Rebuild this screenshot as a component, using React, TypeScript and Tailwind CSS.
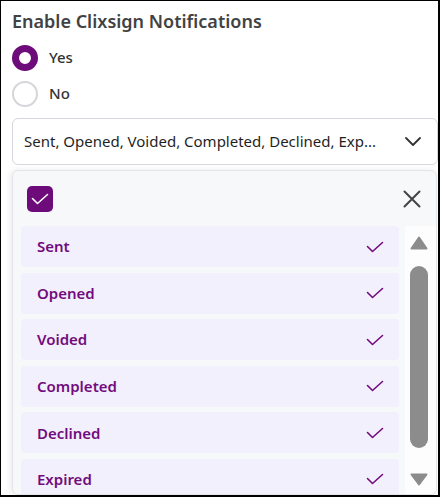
import React from 'react';

const PURPLE = '#6e0b7b';

const options = ['Sent', 'Opened', 'Voided', 'Completed', 'Declined', 'Expired'];

const Check = ({ className }: { className?: string }) => (
  <svg width="18" height="12" viewBox="0 0 18 12" fill="none" className={className}>
    <polyline points="1.5,5.5 6.5,10.5 16.5,1.5" stroke="currentColor" strokeWidth="1.6" strokeLinecap="round" strokeLinejoin="round" />
  </svg>
);

export default function App() {
  return (
    <div
      className="w-[440px] h-[497px] overflow-hidden bg-white border-l border-t border-r-2 border-b-2 border-black pl-[11px]"
      style={{ fontFamily: '"Noto Sans", "Open Sans", sans-serif' }}
    >
      <h2 className="pt-[8px] text-[18px] leading-[24px] font-semibold text-[#424242]">
        Enable Clixsign Notifications
      </h2>

      {/* radio group */}
      <div className="mt-[12px] flex flex-col gap-[10px]">
        <label className="flex items-center gap-[11px] h-[26px]">
          <span className="w-[26px] h-[26px] rounded-full border-[7.5px] border-[#6e0b7b] bg-white" />
          <span className="text-[15px] leading-[20px] font-medium text-[#333] -mt-[2px]">Yes</span>
        </label>
        <label className="flex items-center gap-[11px] h-[26px]">
          <span className="w-[26px] h-[26px] rounded-full border-2 border-[#d4d6da] bg-white" />
          <span className="text-[15px] leading-[20px] font-medium text-[#333] -mt-[2px]">No</span>
        </label>
      </div>

      {/* select */}
      <div className="mt-[11px] h-[47px] rounded-md border border-[#d5d8dc] bg-white flex items-center pl-[11px] pr-[16px]">
        <span className="flex-1 whitespace-nowrap overflow-hidden text-[15px] text-[#1f1f1f]">
          Sent, Opened, Voided, Completed, Declined, Exp...
        </span>
        <svg width="16" height="9" viewBox="0 0 16 9" fill="none" className="text-[#333]">
          <polyline points="1,1 8,8 15,1" stroke="currentColor" strokeWidth="1.8" strokeLinecap="round" strokeLinejoin="round" />
        </svg>
      </div>

      {/* dropdown panel */}
      <div className="mt-[5px] w-[425px] h-[325px] rounded-md border border-[#e3e5e8] bg-[#f7f8fa] shadow-[-2px_0_6px_rgba(0,0,0,0.08)] flex flex-col overflow-hidden">
        <div className="h-[55px] shrink-0 flex items-center justify-between pl-[14px] pr-[15px]">
          <span className="w-[26px] h-[26px] rounded-[5px] flex items-center justify-center text-white" style={{ backgroundColor: PURPLE }}>
            <Check />
          </span>
          <svg width="18" height="18" viewBox="0 0 18 18" fill="none" className="text-[#444]">
            <path d="M1.5 1.5 16.5 16.5M16.5 1.5 1.5 16.5" stroke="currentColor" strokeWidth="2" strokeLinecap="round" />
          </svg>
        </div>

        <div className="flex flex-1 min-h-0">
          <ul className="flex-1 flex flex-col gap-[5.6px] pl-[8px] pr-[6px]">
            {options.map((o) => (
              <li
                key={o}
                className="h-[41px] shrink-0 rounded-[4px] bg-[#f3f0fd] flex items-center justify-between pl-[16px] pr-[15px]"
              >
                <span className="text-[15px] font-semibold text-[#720c7e]">{o}</span>
                <Check className="text-[#720c7e]" />
              </li>
            ))}
          </ul>

          {/* scrollbar */}
          <div className="w-[31px] bg-[#fdfdfd] flex flex-col items-center pt-[10px] pr-[4px]">
            <svg width="18" height="14" viewBox="0 0 18 14">
              <path d="M9 1.5 16.5 12.5H1.5Z" fill="#8c8c8c" stroke="#8c8c8c" strokeWidth="2" strokeLinejoin="round" />
            </svg>
            <div className="mt-[16px] w-[18px] h-[182px] rounded-full bg-[#8c8c8c]" />
            <svg width="18" height="13" viewBox="0 0 18 13" className="mt-[25px]">
              <path d="M1.5 1.5H16.5L9 11.5Z" fill="#8c8c8c" stroke="#8c8c8c" strokeWidth="2" strokeLinejoin="round" />
            </svg>
          </div>
        </div>
      </div>
    </div>
  );
}
